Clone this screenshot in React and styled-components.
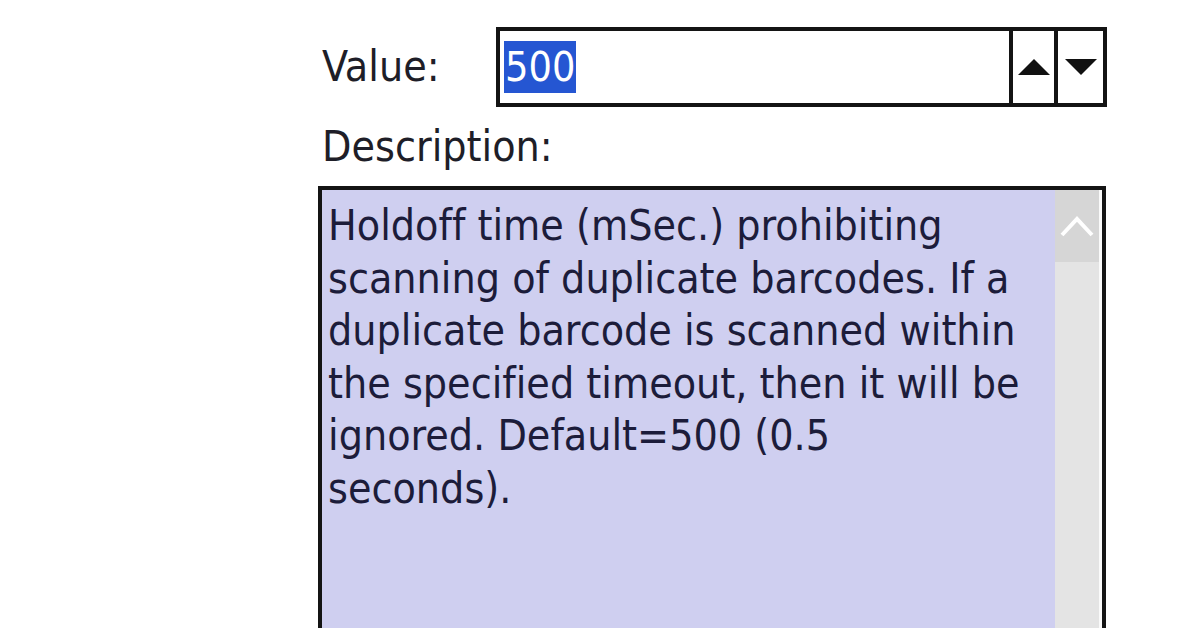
import React from 'react';
import styled, { createGlobalStyle } from 'styled-components';

const Global = createGlobalStyle`
  html, body { margin: 0; padding: 0; background: #ffffff; }
  body {
    width: 1196px;
    height: 628px;
    overflow: hidden;
    font-family: "DejaVu Sans Condensed", "DejaVu Sans", sans-serif;
    font-variant-ligatures: none;
  }
`;

const Page = styled.div`
  width: 1196px;
  height: 628px;
  overflow: hidden;
  box-sizing: border-box;
  padding: 27px 0 0 318px;
  display: flex;
  flex-direction: column;
  background: #ffffff;
`;

const ValueRow = styled.div`
  display: flex;
  align-items: center;
  height: 80px;
  flex-shrink: 0;
`;

const Label = styled.div`
  width: ${(p) => p.$width || 'auto'};
  padding-left: 4px;
  box-sizing: border-box;
  font-size: 42.5px;
  line-height: 52px;
  color: #1e1e28;
`;

const SpinBox = styled.div`
  width: 611px;
  height: 80px;
  box-sizing: border-box;
  border: 4px solid #141414;
  display: flex;
  background: #ffffff;
`;

const Field = styled.div`
  flex: 1;
  display: flex;
  align-items: center;
  padding-left: 4px;
`;

const Selected = styled.span`
  background: #2556d2;
  color: #ffffff;
  font-size: 41px;
  line-height: 52px;
  height: 52px;
  padding: 0 1px;
`;

const SpinButton = styled.div`
  width: ${(p) => p.$w}px;
  border-left: 4px solid #141414;
  box-sizing: border-box;
  display: flex;
  align-items: center;
  justify-content: center;
`;

const DescRow = styled.div`
  height: 79px;
  flex-shrink: 0;
  display: flex;
  align-items: center;
`;

const TextBox = styled.div`
  width: 788px;
  height: 470px;
  flex-shrink: 0;
  box-sizing: border-box;
  border: 4px solid #141414;
  display: flex;
  background: #fafafa;
`;

const TextArea = styled.div`
  flex: 1;
  background: #cfcff0;
  padding: 10px 0 0 6px;
  font-size: 42.5px;
  line-height: 52.6px;
  color: #1c1c3a;
  white-space: pre-line;
  font-variant-ligatures: none;
`;

const ScrollBar = styled.div`
  width: 44px;
  margin-right: 3px;
  background: #e4e4e4;
  display: flex;
  flex-direction: column;
`;

const ScrollUp = styled.div`
  height: 72px;
  background: #d6d6d6;
  display: flex;
  align-items: center;
  justify-content: center;
`;

const text = `Holdoff time (mSec.) prohibiting
scanning of duplicate barcodes. If a
duplicate barcode is scanned within
the specified timeout, then it will be
ignored. Default=500 (0.5
seconds).`;

export default function App() {
  return (
    <>
      <Global />
      <Page>
        <ValueRow>
          <Label $width="178px">Value:</Label>
          <SpinBox>
            <Field>
              <Selected>500</Selected>
            </Field>
            <SpinButton $w={45}>
              <svg width="32" height="16" viewBox="0 0 32 16">
                <polygon points="16,0 32,16 0,16" fill="#111" />
              </svg>
            </SpinButton>
            <SpinButton $w={49}>
              <svg width="32" height="16" viewBox="0 0 32 16">
                <polygon points="0,0 32,0 16,16" fill="#111" />
              </svg>
            </SpinButton>
          </SpinBox>
        </ValueRow>
        <DescRow>
          <Label>Description:</Label>
        </DescRow>
        <TextBox>
          <TextArea>{text}</TextArea>
          <ScrollBar>
            <ScrollUp>
              <svg width="34" height="22" viewBox="0 0 34 22">
                <polyline points="2,20 17,4 32,20" fill="none" stroke="#ffffff" strokeWidth="4" />
              </svg>
            </ScrollUp>
          </ScrollBar>
        </TextBox>
      </Page>
    </>
  );
}
